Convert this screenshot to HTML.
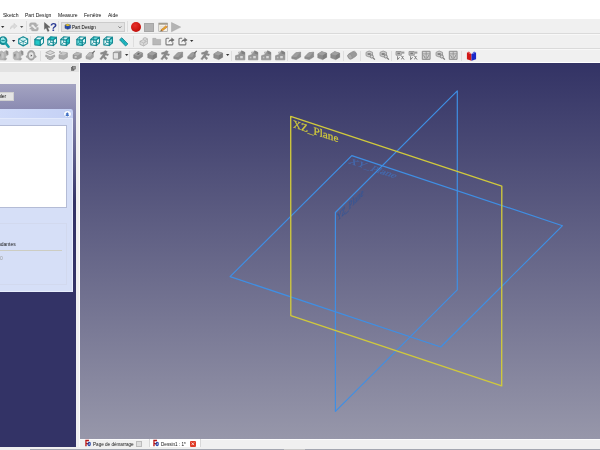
<!DOCTYPE html><html><head><meta charset="utf-8"><title>FreeCAD</title><style>
html,body{margin:0;padding:0;}
body{width:600px;height:450px;overflow:hidden;position:relative;background:#f0f0f0;font-family:"Liberation Sans",sans-serif;}
.a{position:absolute;}
.t{position:absolute;white-space:nowrap;filter:blur(0.2px);transform-origin:0 0;line-height:1;color:#222;}
svg{position:absolute;overflow:visible;}
.i{filter:blur(0.28px);}
</style></head><body>
<div class="a" style="left:0;top:0;width:600px;height:19.3px;background:#fff"></div>
<div class="t" style="left:2.9px;top:13.1px;font-size:20px;transform:scale(0.2525);color:#111;">Sketch</div>
<div class="t" style="left:24.9px;top:13.1px;font-size:20px;transform:scale(0.2525);color:#111;">Part Design</div>
<div class="t" style="left:57.5px;top:13.1px;font-size:20px;transform:scale(0.2525);color:#111;">Measure</div>
<div class="t" style="left:84.0px;top:13.1px;font-size:20px;transform:scale(0.2525);color:#111;">Fenêtre</div>
<div class="t" style="left:107.9px;top:13.1px;font-size:20px;transform:scale(0.2525);color:#111;">Aide</div>
<div class="a" style="left:0;top:19.3px;width:600px;height:42.2px;background:#f0f0f0"></div>
<div class="a" style="left:0;top:33.3px;width:600px;height:0.8px;background:#dadada"></div>
<div class="a" style="left:0;top:34.1px;width:600px;height:0.8px;background:#f8f8f8"></div>
<div class="a" style="left:0;top:48px;width:600px;height:0.8px;background:#dadada"></div>
<div class="a" style="left:0;top:48.8px;width:600px;height:0.8px;background:#f8f8f8"></div>
<div class="a" style="left:0;top:61.5px;width:600px;height:1.8px;background:#fff"></div>
<svg style="left:1.3px;top:25.6px" width="3.4" height="2" viewBox="0 0 4 2.4"><path d="M0 0H4L2 2.4Z" fill="#333"/></svg>
<svg class="i" style="left:8.5px;top:22px" width="9" height="9" viewBox="0 0 20 20"><path d="M3 16C3 9 7 7 11 7V3L18 9L11 15V11C8 11 5 12 3 16Z" fill="#dcdcdc" stroke="#c4c4c4" stroke-width="1"/></svg>
<svg style="left:19.8px;top:25.6px" width="3.4" height="2" viewBox="0 0 4 2.4"><path d="M0 0H4L2 2.4Z" fill="#555"/></svg>
<div class="a" style="left:25.6px;top:21px;width:0.8px;height:11px;background:#dedede"></div>
<svg class="i" style="left:28.8px;top:22.1px" width="9.8" height="9.8" viewBox="0 0 20 20"><path d="M1 9V5Q1 1.5 4.5 1.5H12.5Q15.5 1.5 15.5 5V5.5H19L14 11L9 5.5H12.2Q12.2 5 11.5 5H5.5Q4.6 5 4.6 6V9Z" fill="#b0b0b0" stroke="#a0a0a0" stroke-width=".6"/><g transform="rotate(180 10 10)"><path d="M1 9V5Q1 1.5 4.5 1.5H12.5Q15.5 1.5 15.5 5V5.5H19L14 11L9 5.5H12.2Q12.2 5 11.5 5H5.5Q4.6 5 4.6 6V9Z" fill="#b0b0b0" stroke="#a0a0a0" stroke-width=".6"/></g></svg>
<svg class="i" style="left:44.4px;top:22px" width="6.6" height="10" viewBox="0 0 14 20"><path d="M1 0.5L1 15L4.6 11.6L8 19.5L10.8 18.2L7.4 10.8L12.8 10.6Z" fill="#666" stroke="#484848" stroke-width=".8"/></svg>
<div class="t" style="left:49.6px;top:20.9px;font-size:20px;font-weight:bold;transform:scale(0.58);color:#2b3b94">?</div>
<div class="a" style="left:57.6px;top:21px;width:0.8px;height:11px;background:#dedede"></div>
<div class="a" style="left:61px;top:22px;width:63.5px;height:9.6px;background:#e2e2e2;border:0.6px solid #cccccc;box-sizing:border-box"></div>
<svg class="i" style="left:63.5px;top:23.3px" width="7.5" height="7" viewBox="0 0 20 20"><path d="M2 6L9 3L18 6V15L10 18L2 15Z" fill="#2a4fb0" stroke="#1a2a60" stroke-width="1"/><path d="M2 6L9 3L18 6L10 9Z" fill="#e8c520"/><path d="M10 9V18" stroke="#1a2a60" stroke-width="1"/></svg>
<div class="t" style="left:71.5px;top:24.95px;font-size:20px;transform:scale(0.2275);color:#000;">Part Design</div>
<svg style="left:118.2px;top:26px" width="3.8" height="2.3" viewBox="0 0 5 3"><path d="M0.5 0.5L2.5 2.5L4.5 0.5" fill="none" stroke="#444" stroke-width=".8"/></svg>
<div class="a" style="left:126.6px;top:21px;width:0.8px;height:11px;background:#dedede"></div>
<div class="a" style="left:130.7px;top:22.1px;width:10.3px;height:10.3px;border-radius:50%;background:radial-gradient(circle at 40% 35%,#e8302a,#c4100c 70%,#a00c08);"></div>
<div class="a" style="left:144.4px;top:22.7px;width:9.5px;height:9.4px;background:#b4b4b4;border:0.5px solid #a6a6a6;box-sizing:border-box"></div>
<svg class="i" style="left:157.6px;top:21.8px" width="10.4" height="10.4" viewBox="0 0 20 20"><rect x="1.5" y="2" width="17" height="16.5" fill="#f6f2e6" stroke="#9a9a9a" stroke-width="1.2"/><rect x="1.5" y="2" width="17" height="3.2" fill="#a09a8c"/><path d="M4 9.5H14M4 13H12" stroke="#c0bcb0" stroke-width="1"/><path d="M5.5 15.5L15.5 7L18 9.5L8 17.5Z" fill="#e6b422" stroke="#b83a22" stroke-width=".9"/><path d="M5.5 15.5L4.5 18.5L8 17.5Z" fill="#553"/></svg>
<svg class="i" style="left:171px;top:22px" width="10.2" height="10.2" viewBox="0 0 20 20"><path d="M1 1L19 10L1 19Z" fill="#b4b4b4" stroke="#a4a4a4" stroke-width="1"/></svg>
<svg class="i" style="left:-2px;top:35.5px" width="12" height="12" viewBox="0 0 12 12"><circle cx="5.1" cy="4.6" r="3.4" fill="#7fe0e0" stroke="#148a94" stroke-width="1.8"/><path d="M7.9 7.5L10.5 10.7" stroke="#18a0aa" stroke-width="2.6" stroke-linecap="round"/><path d="M3.4 4.6H6.8" stroke="#148a94" stroke-width="1"/><path d="M3 3.2A2.6 2.6 0 0 1 6 2.2" stroke="#e8ffff" stroke-width=".9" fill="none"/></svg>
<svg style="left:11.600000000000001px;top:39.6px" width="3.4" height="2" viewBox="0 0 4 2.4"><path d="M0 0H4L2 2.4Z" fill="#223"/></svg>
<svg class="i" style="left:17.8px;top:36px" width="10.4" height="10.6" viewBox="0 0 20 20"><path d="M10 1.2L18.6 5.6V14.4L10 18.8L1.4 14.4V5.6Z" fill="#f2fdfd" stroke="#148a94" stroke-width="2.2" stroke-linejoin="round"/><path d="M10 1.2V18.8M1.4 5.6L18.6 14.4M18.6 5.6L1.4 14.4" stroke="#148a94" stroke-width="1.5"/><path d="M10 3.4L15.2 6.2L10 9L4.8 6.2Z" fill="#c4f2f2"/></svg>
<div class="a" style="left:30.400000000000002px;top:36px;width:0.8px;height:11px;background:#dedede"></div>
<svg class="i" style="left:33.8px;top:36.2px" width="10.2" height="10.4" viewBox="0 0 20 20"><path d="M1.6 6.6L12.4 7.6L12.4 18.6L1.6 17.2Z" fill="#22c8c8" stroke="#148a94" stroke-width="2.1" stroke-linejoin="round"/><path d="M1.6 6.6L7.2 1.4L18.6 2.2L12.4 7.6Z" fill="#e4fafa" stroke="#148a94" stroke-width="2.1" stroke-linejoin="round"/><path d="M12.4 7.6L18.6 2.2L18.6 13.4L12.4 18.6Z" fill="#eefcfc" stroke="#148a94" stroke-width="2.1" stroke-linejoin="round"/></svg>
<svg class="i" style="left:47.2px;top:36.2px" width="10.2" height="10.4" viewBox="0 0 20 20"><path d="M1.6 6.6L12.4 7.6L12.4 18.6L1.6 17.2Z" fill="#eafafa" stroke="#148a94" stroke-width="2.1" stroke-linejoin="round"/><path d="M1.6 6.6L7.2 1.4L18.6 2.2L12.4 7.6Z" fill="#22c8c8" stroke="#148a94" stroke-width="2.1" stroke-linejoin="round"/><path d="M12.4 7.6L18.6 2.2L18.6 13.4L12.4 18.6Z" fill="#eafafa" stroke="#148a94" stroke-width="2.1" stroke-linejoin="round"/><path d="M7.2 1.4V12.4L18.6 13.4M7.2 12.4L1.6 17.2" stroke="#148a94" stroke-width="1.6" fill="none"/></svg>
<svg class="i" style="left:60.3px;top:36.2px" width="10.2" height="10.4" viewBox="0 0 20 20"><path d="M1.6 6.6L12.4 7.6L12.4 18.6L1.6 17.2Z" fill="#eafafa" stroke="#148a94" stroke-width="2.1" stroke-linejoin="round"/><path d="M1.6 6.6L7.2 1.4L18.6 2.2L12.4 7.6Z" fill="#d8f6f6" stroke="#148a94" stroke-width="2.1" stroke-linejoin="round"/><path d="M12.4 7.6L18.6 2.2L18.6 13.4L12.4 18.6Z" fill="#22c8c8" stroke="#148a94" stroke-width="2.1" stroke-linejoin="round"/><path d="M7.2 1.4V12.4L18.6 13.4M7.2 12.4L1.6 17.2" stroke="#148a94" stroke-width="1.6" fill="none"/></svg>
<svg class="i" style="left:76.2px;top:36.2px" width="10.2" height="10.4" viewBox="0 0 20 20"><path d="M1.6 6.6L12.4 7.6L12.4 18.6L1.6 17.2Z" fill="#6cdcdc" stroke="#148a94" stroke-width="2.1" stroke-linejoin="round"/><path d="M1.6 6.6L7.2 1.4L18.6 2.2L12.4 7.6Z" fill="#eafafa" stroke="#148a94" stroke-width="2.1" stroke-linejoin="round"/><path d="M12.4 7.6L18.6 2.2L18.6 13.4L12.4 18.6Z" fill="#eafafa" stroke="#148a94" stroke-width="2.1" stroke-linejoin="round"/><path d="M7.2 1.4V12.4L18.6 13.4M7.2 12.4L1.6 17.2" stroke="#148a94" stroke-width="1.6" fill="none"/></svg>
<svg class="i" style="left:89.8px;top:36.2px" width="10.2" height="10.4" viewBox="0 0 20 20"><path d="M1.6 6.6L12.4 7.6L12.4 18.6L1.6 17.2Z" fill="#eafafa" stroke="#148a94" stroke-width="2.1" stroke-linejoin="round"/><path d="M1.6 6.6L7.2 1.4L18.6 2.2L12.4 7.6Z" fill="#6cdcdc" stroke="#148a94" stroke-width="2.1" stroke-linejoin="round"/><path d="M12.4 7.6L18.6 2.2L18.6 13.4L12.4 18.6Z" fill="#eafafa" stroke="#148a94" stroke-width="2.1" stroke-linejoin="round"/><path d="M7.2 1.4V12.4L18.6 13.4M7.2 12.4L1.6 17.2" stroke="#148a94" stroke-width="1.6" fill="none"/></svg>
<svg class="i" style="left:103.2px;top:36.2px" width="10.2" height="10.4" viewBox="0 0 20 20"><path d="M1.6 6.6L12.4 7.6L12.4 18.6L1.6 17.2Z" fill="#eafafa" stroke="#148a94" stroke-width="2.1" stroke-linejoin="round"/><path d="M1.6 6.6L7.2 1.4L18.6 2.2L12.4 7.6Z" fill="#eafafa" stroke="#148a94" stroke-width="2.1" stroke-linejoin="round"/><path d="M12.4 7.6L18.6 2.2L18.6 13.4L12.4 18.6Z" fill="#6cdcdc" stroke="#148a94" stroke-width="2.1" stroke-linejoin="round"/><path d="M7.2 1.4V12.4L18.6 13.4M7.2 12.4L1.6 17.2" stroke="#148a94" stroke-width="1.6" fill="none"/></svg>
<svg class="i" style="left:119.3px;top:36.5px" width="9.4" height="9.8" viewBox="0 0 20 20"><path d="M1.2 5.5L6 1.2L18.8 14.5L14 18.8Z" fill="#20bcc6" stroke="#0f7c88" stroke-width="1.7" stroke-linejoin="round"/><path d="M5 7L7 5.2M8 10L10 8.2M11 13L13 11.2" stroke="#0c6874" stroke-width="1"/></svg>
<div class="a" style="left:133.29999999999998px;top:36px;width:0.8px;height:11px;background:#dedede"></div>
<svg class="i" style="left:138.7px;top:36.5px" width="9.4" height="9.6" viewBox="0 0 20 20"><path d="M2 9L9 5.5V2.5L13 1L18 3.5V14L10 19L2 15.5Z" fill="#dadada" stroke="#a2a2a2" stroke-width="1.3" stroke-linejoin="round"/><path d="M2 9L10 12.5L18 8M10 12.5V19M9 5.5L13 7.5L18 3.5M13 7.5V11" stroke="#a8a8a8" stroke-width="1.1" fill="none"/></svg>
<svg class="i" style="left:151.7px;top:37px" width="9.4" height="8.8" viewBox="0 0 20 20"><path d="M1 3H8L10 5.5H19V18H1Z" fill="#b8b8b8" stroke="#9c9c9c" stroke-width="1"/></svg>
<svg class="i" style="left:165px;top:36.4px" width="9.8" height="10" viewBox="0 0 20 20"><path d="M8.5 4.5H4Q2 4.5 2 6.5V16Q2 18 4 18H14Q16 18 16 16V12.5" fill="#f4f4f4" stroke="#7a7a7a" stroke-width="2.3"/><path d="M7 13.5C7 8.5 10 6.5 13 6.5V3L19.5 8L13 13V9.8C10.5 9.8 8.5 10.5 7 13.5Z" fill="#707070"/></svg>
<svg class="i" style="left:178.3px;top:36.4px" width="9.8" height="10" viewBox="0 0 20 20"><path d="M8.5 4.5H4Q2 4.5 2 6.5V16Q2 18 4 18H14Q16 18 16 16V12.5" fill="#f4f4f4" stroke="#7a7a7a" stroke-width="2.3"/><path d="M7 13.5C7 8.5 10 6.5 13 6.5V3L19.5 8L13 13V9.8C10.5 9.8 8.5 10.5 7 13.5Z" fill="#707070"/></svg>
<svg style="left:190.3px;top:39.6px" width="3.4" height="2" viewBox="0 0 4 2.4"><path d="M0 0H4L2 2.4Z" fill="#333"/></svg>
<svg class="i" style="left:-2.1px;top:50.4px" width="10.4" height="10.4" viewBox="0 0 20 20"><path d="M0.5 5L7 2L11 4.5L15.5 1L19.5 3V9.5L15 11.5V15.5L17.5 17L14 19.5L3 19L0.5 16Z" fill="#b4b4b4" stroke="#a2a2a2" stroke-width=".8"/><path d="M15.5 1L19.5 3V9.5L16 8Z" fill="#8e8e8e"/><path d="M2 8L5 7V12L2 13Z" fill="#8a8a8a"/><path d="M7 5L11 6.5V15L7 17Z" fill="#c6c6c6"/><path d="M13 16L16 17.5L14 19L12 18Z" fill="#909090"/></svg>
<svg class="i" style="left:12.6px;top:50.4px" width="10.4" height="10.4" viewBox="0 0 20 20"><path d="M0.5 5L7 2L11 4.5L15.5 1L19.5 3V9.5L15 11.5V15.5L17.5 17L14 19.5L3 19L0.5 16Z" fill="#b4b4b4" stroke="#a2a2a2" stroke-width=".8"/><path d="M15.5 1L19.5 3V9.5L16 8Z" fill="#8e8e8e"/><path d="M2 8L5 7V12L2 13Z" fill="#8a8a8a"/><path d="M7 5L11 6.5V15L7 17Z" fill="#c6c6c6"/><path d="M13 16L16 17.5L14 19L12 18Z" fill="#909090"/></svg>
<svg class="i" style="left:26.4px;top:50.4px" width="10.4" height="10.4" viewBox="0 0 20 20"><path d="M10 1C15.5 1 17 5.5 17 9L20 13.5L16.5 15C15.5 18 13 19.5 10 19.5C7 19.5 4.5 18 3.5 15L0 13.5L3 9C3 5.5 4.5 1 10 1Z" fill="#a8a8a8" stroke="#8e8e8e" stroke-width="1"/><path d="M10 4.5C13.5 4.5 14.5 7.5 14.5 10.5C14.5 14.5 12.5 16.5 10 16.5C7.5 16.5 5.5 14.5 5.5 10.5C5.5 7.5 6.5 4.5 10 4.5Z" fill="#e6e6e6"/><path d="M9.2 8.8L12.2 10.8L9.2 12.8Z" fill="#555"/></svg>
<div class="a" style="left:40.1px;top:50.5px;width:0.8px;height:10.0px;background:#dedede"></div>
<svg class="i" style="left:45.0px;top:50.4px" width="10.4" height="10.4" viewBox="0 0 20 20"><path d="M1.5 5L10 1L18.5 5L10 9Z" fill="#d8d8d8" stroke="#909090" stroke-width="1.3"/><path d="M1.5 9.5L10 13L18.5 9.5V13L10 16.5L1.5 13Z" fill="#b0b0b0" stroke="#909090" stroke-width="1.2"/><path d="M4 16L10 18.5L16 16" fill="none" stroke="#8a8a8a" stroke-width="1.6"/></svg>
<svg class="i" style="left:58.1px;top:50.4px" width="10.4" height="10.4" viewBox="0 0 20 20"><path d="M2 9L9 4L18 5.5V14L11 18L2 16Z" fill="#acacac" stroke="#8c8c8c" stroke-width="1.1"/><path d="M2 9L9 4L18 5.5L11 10Z" fill="#c8c8c8"/><path d="M3 3L8 7M3 3L3 6M3 3L6 3" stroke="#8c8c8c" stroke-width="1.2" fill="none"/></svg>
<svg class="i" style="left:71.7px;top:50.4px" width="10.4" height="10.4" viewBox="0 0 20 20"><path d="M2 9L9 4.5L18 6.5V14.5L11 18L2 16Z" fill="#9a9a9a" stroke="#828282" stroke-width="1"/><path d="M2 9L9 4.5L18 6.5L11 10.5Z" fill="#b6b6b6"/><path d="M5 11.5H9V15H5Z" fill="#d0d0d0"/></svg>
<svg class="i" style="left:84.9px;top:50.4px" width="10.4" height="10.4" viewBox="0 0 20 20"><path d="M2 12L8 5L16 5V14L10 18.5L2 16.5Z" fill="#a4a4a4" stroke="#8a8a8a" stroke-width="1"/><path d="M2 12L8 5L16 5L10 13Z" fill="#bababa"/><path d="M13 6L18 1L19.5 2.5L14.5 7.5Z" fill="#6e6e6e"/></svg>
<svg class="i" style="left:98.60000000000001px;top:50.4px" width="10.4" height="10.4" viewBox="0 0 20 20"><path d="M12 1L16 3L14 6.5L18.5 8L17 11L12.5 9.5L11 12.5L15 15.5L12.5 19L8 14.5L4.5 19L1.5 17.5L6 11L8 7L3.5 8.5L2.5 5.5L9 3.5Z" fill="#8a8a8a" stroke="#7a7a7a" stroke-width=".6"/></svg>
<svg class="i" style="left:111.8px;top:50.4px" width="10.4" height="10.4" viewBox="0 0 20 20"><path d="M2.5 5H13V17.5H2.5Z" fill="#e4e4e4" stroke="#848484" stroke-width="1.5"/><path d="M13 5L17.5 2.5V15L13 17.5Z" fill="#9c9c9c" stroke="#848484" stroke-width="1"/><path d="M2.5 5L7 2.5H17.5" stroke="#848484" stroke-width="1.2" fill="none"/></svg>
<svg style="left:124.5px;top:54.1px" width="3.4" height="2" viewBox="0 0 4 2.4"><path d="M0 0H4L2 2.4Z" fill="#333"/></svg>
<div class="a" style="left:129.4px;top:50.5px;width:0.8px;height:10.0px;background:#dedede"></div>
<svg class="i" style="left:133.1px;top:50.4px" width="10.4" height="10.4" viewBox="0 0 20 20"><path d="M1.5 9L10 3L18.5 6V12.5L10 18.5L1.5 15.5Z" fill="#8a8a8a" stroke="#767676" stroke-width="1"/><path d="M1.5 9L10 3L18.5 6L10 12Z" fill="#a2a2a2"/><path d="M7 8L10.5 5.8L13.5 7L10 9.2Z" fill="#5e5e5e"/></svg>
<svg class="i" style="left:146.5px;top:50.4px" width="10.4" height="10.4" viewBox="0 0 20 20"><path d="M1.5 7.5L9 3L18.5 6V14L11 18.5L1.5 15Z" fill="#8c8c8c" stroke="#7a7a7a" stroke-width="1"/><path d="M1.5 7.5L9 3L18.5 6L11 10.5Z" fill="#a0a0a0"/><path d="M11 10.5V18.5L18.5 14V6Z" fill="#7e7e7e"/></svg>
<svg class="i" style="left:159.79999999999998px;top:50.4px" width="10.4" height="10.4" viewBox="0 0 20 20"><path d="M12 1L16 3L14 6.5L18.5 8L17 11L12.5 9.5L11 12.5L15 15.5L12.5 19L8 14.5L4.5 19L1.5 17.5L6 11L8 7L3.5 8.5L2.5 5.5L9 3.5Z" fill="#8a8a8a" stroke="#7a7a7a" stroke-width=".6"/></svg>
<svg class="i" style="left:173.1px;top:50.4px" width="10.4" height="10.4" viewBox="0 0 20 20"><path d="M1.5 13L9 5.5L18.5 4V13.5L10 18.5L1.5 16.5Z" fill="#8c8c8c" stroke="#787878" stroke-width="1"/><path d="M1.5 13L9 5.5L18.5 4L10 13.5Z" fill="#9e9e9e"/></svg>
<svg class="i" style="left:186.5px;top:50.4px" width="10.4" height="10.4" viewBox="0 0 20 20"><path d="M1.5 13L9 5.5L16 4.5V13.5L10 18.5L1.5 16.5Z" fill="#8c8c8c" stroke="#787878" stroke-width="1"/><path d="M1.5 13L9 5.5L16 4.5L10 13.5Z" fill="#9e9e9e"/><path d="M13 6L18 1L19.5 2.5L14.5 7.5Z" fill="#6e6e6e"/></svg>
<svg class="i" style="left:200.0px;top:50.4px" width="10.4" height="10.4" viewBox="0 0 20 20"><path d="M12 1L16 3L14 6.5L18.5 8L17 11L12.5 9.5L11 12.5L15 15.5L12.5 19L8 14.5L4.5 19L1.5 17.5L6 11L8 7L3.5 8.5L2.5 5.5L9 3.5Z" fill="#8a8a8a" stroke="#7a7a7a" stroke-width=".6"/></svg>
<svg class="i" style="left:213.1px;top:50.4px" width="10.4" height="10.4" viewBox="0 0 20 20"><path d="M1.5 7.5L9 3L18.5 6V14L11 18.5L1.5 15Z" fill="#8c8c8c" stroke="#7a7a7a" stroke-width="1"/><path d="M1.5 7.5L9 3L18.5 6L11 10.5Z" fill="#a0a0a0"/><path d="M11 10.5V18.5L18.5 14V6Z" fill="#7e7e7e"/></svg>
<svg style="left:225.8px;top:54.1px" width="3.4" height="2" viewBox="0 0 4 2.4"><path d="M0 0H4L2 2.4Z" fill="#333"/></svg>
<div class="a" style="left:230.9px;top:50.5px;width:0.8px;height:10.0px;background:#dedede"></div>
<svg class="i" style="left:234.5px;top:50.4px" width="10.4" height="10.4" viewBox="0 0 20 20"><path d="M1 19V11L7 9L12.5 1.5L19 4.5V19Z" fill="#989898" stroke="#848484" stroke-width="1"/><path d="M10 11.5H15V16H10Z" fill="#d8d8d8"/><path d="M3.5 13H6.5V16H3.5Z" fill="#c0c0c0"/><path d="M12.5 1.5L19 4.5V9L12.5 6.5Z" fill="#808080"/><path d="M6 4L9 2.5V6L6 7Z" fill="#b0b0b0"/></svg>
<svg class="i" style="left:247.79999999999998px;top:50.4px" width="10.4" height="10.4" viewBox="0 0 20 20"><path d="M1 19V11L7 9L12.5 1.5L19 4.5V19Z" fill="#989898" stroke="#848484" stroke-width="1"/><path d="M10 11.5H15V16H10Z" fill="#d8d8d8"/><path d="M3.5 13H6.5V16H3.5Z" fill="#c0c0c0"/><path d="M12.5 1.5L19 4.5V9L12.5 6.5Z" fill="#808080"/><path d="M6 4L9 2.5V6L6 7Z" fill="#b0b0b0"/></svg>
<svg class="i" style="left:261.09999999999997px;top:50.4px" width="10.4" height="10.4" viewBox="0 0 20 20"><path d="M1 19V11L7 9L12.5 1.5L19 4.5V19Z" fill="#989898" stroke="#848484" stroke-width="1"/><path d="M10 11.5H15V16H10Z" fill="#d8d8d8"/><path d="M3.5 13H6.5V16H3.5Z" fill="#c0c0c0"/><path d="M12.5 1.5L19 4.5V9L12.5 6.5Z" fill="#808080"/><path d="M6 4L9 2.5V6L6 7Z" fill="#b0b0b0"/></svg>
<svg class="i" style="left:274.5px;top:50.4px" width="10.4" height="10.4" viewBox="0 0 20 20"><path d="M1 19V11L7 9L12.5 1.5L19 4.5V19Z" fill="#989898" stroke="#848484" stroke-width="1"/><path d="M10 11.5H15V16H10Z" fill="#d8d8d8"/><path d="M3.5 13H6.5V16H3.5Z" fill="#c0c0c0"/><path d="M12.5 1.5L19 4.5V9L12.5 6.5Z" fill="#808080"/><path d="M6 4L9 2.5V6L6 7Z" fill="#b0b0b0"/></svg>
<div class="a" style="left:287.40000000000003px;top:50.5px;width:0.8px;height:10.0px;background:#dedede"></div>
<svg class="i" style="left:290.59999999999997px;top:50.4px" width="10.4" height="10.4" viewBox="0 0 20 20"><path d="M1.5 13L9 5.5L18.5 4V13.5L10 18.5L1.5 16.5Z" fill="#8c8c8c" stroke="#787878" stroke-width="1"/><path d="M1.5 13L9 5.5L18.5 4L10 13.5Z" fill="#9e9e9e"/></svg>
<svg class="i" style="left:303.8px;top:50.4px" width="10.4" height="10.4" viewBox="0 0 20 20"><path d="M1.5 13L9 5.5L18.5 4V13.5L10 18.5L1.5 16.5Z" fill="#8c8c8c" stroke="#787878" stroke-width="1"/><path d="M1.5 13L9 5.5L18.5 4L10 13.5Z" fill="#9e9e9e"/></svg>
<svg class="i" style="left:316.8px;top:50.4px" width="10.4" height="10.4" viewBox="0 0 20 20"><path d="M1.5 7.5L9 3L18.5 6V14L11 18.5L1.5 15Z" fill="#8c8c8c" stroke="#7a7a7a" stroke-width="1"/><path d="M1.5 7.5L9 3L18.5 6L11 10.5Z" fill="#a0a0a0"/><path d="M11 10.5V18.5L18.5 14V6Z" fill="#7e7e7e"/></svg>
<svg class="i" style="left:330.09999999999997px;top:50.4px" width="10.4" height="10.4" viewBox="0 0 20 20"><path d="M1.5 7.5L9 3L18.5 6V14L11 18.5L1.5 15Z" fill="#8c8c8c" stroke="#7a7a7a" stroke-width="1"/><path d="M1.5 7.5L9 3L18.5 6L11 10.5Z" fill="#a0a0a0"/><path d="M11 10.5V18.5L18.5 14V6Z" fill="#7e7e7e"/></svg>
<div class="a" style="left:343.1px;top:50.5px;width:0.8px;height:10.0px;background:#dedede"></div>
<svg class="i" style="left:346.5px;top:50.4px" width="10.4" height="10.4" viewBox="0 0 20 20"><g transform="rotate(-32 10 10)"><rect x="1" y="4.5" width="18" height="11" rx="5" ry="5.5" fill="#9a9a9a" stroke="#828282" stroke-width="1"/><ellipse cx="5" cy="10" rx="3.4" ry="5" fill="#ababab" stroke="#8a8a8a" stroke-width=".8"/></g></svg>
<div class="a" style="left:359.90000000000003px;top:50.5px;width:0.8px;height:10.0px;background:#dedede"></div>
<svg class="i" style="left:364.7px;top:50.4px" width="10.4" height="10.4" viewBox="0 0 20 20"><path d="M2 4.5L8 2L14.5 4.5V11L8 13.5L2 11Z" fill="#cacaca" stroke="#8e8e8e" stroke-width="1.5"/><path d="M5 6H11V9.5H5Z" fill="#7e7e7e"/><circle cx="13" cy="12.5" r="3" fill="#d8d8d8" stroke="#7a7a7a" stroke-width="1.7"/><path d="M15.5 15L19 18.5" stroke="#7a7a7a" stroke-width="2.4"/></svg>
<svg class="i" style="left:378.7px;top:50.4px" width="10.4" height="10.4" viewBox="0 0 20 20"><path d="M2 4.5L8 2L14.5 4.5V11L8 13.5L2 11Z" fill="#cacaca" stroke="#8e8e8e" stroke-width="1.5"/><path d="M5 6H11V9.5H5Z" fill="#7e7e7e"/><circle cx="13" cy="12.5" r="3" fill="#d8d8d8" stroke="#7a7a7a" stroke-width="1.7"/><path d="M15.5 15L19 18.5" stroke="#7a7a7a" stroke-width="2.4"/></svg>
<div class="a" style="left:391.40000000000003px;top:50.5px;width:0.8px;height:10.0px;background:#dedede"></div>
<svg class="i" style="left:394.5px;top:50.4px" width="10.4" height="10.4" viewBox="0 0 20 20"><path d="M2 3H12V10H2Z" fill="#c6c6c6" stroke="#8a8a8a" stroke-width="1.6"/><path d="M4.5 5H9.5V8H4.5Z" fill="#7a7a7a"/><path d="M13 3H18V7H13Z" fill="#9a9a9a"/><path d="M5 12V18.5M5 18.5L9 14M12 11L17.5 18.5M16 11.5L12.5 18" stroke="#7e7e7e" stroke-width="1.9" fill="none"/></svg>
<svg class="i" style="left:407.8px;top:50.4px" width="10.4" height="10.4" viewBox="0 0 20 20"><path d="M2 3H12V10H2Z" fill="#c6c6c6" stroke="#8a8a8a" stroke-width="1.6"/><path d="M4.5 5H9.5V8H4.5Z" fill="#7a7a7a"/><path d="M13 3H18V7H13Z" fill="#9a9a9a"/><path d="M5 12V18.5M5 18.5L9 14M12 11L17.5 18.5M16 11.5L12.5 18" stroke="#7e7e7e" stroke-width="1.9" fill="none"/></svg>
<svg class="i" style="left:420.8px;top:50.4px" width="10.4" height="10.4" viewBox="0 0 20 20"><path d="M2.5 2.5H17.5V18H2.5Z" fill="#d2d2d2" stroke="#868686" stroke-width="1.8"/><path d="M10 2.5V18M2.5 7.5H17.5" stroke="#8c8c8c" stroke-width="1.5"/><path d="M5 10L8 16M15 10L12 16" stroke="#7e7e7e" stroke-width="1.6"/></svg>
<svg class="i" style="left:434.5px;top:50.4px" width="10.4" height="10.4" viewBox="0 0 20 20"><path d="M2 4.5L8 2L14.5 4.5V11L8 13.5L2 11Z" fill="#cacaca" stroke="#8e8e8e" stroke-width="1.5"/><path d="M5 6H11V9.5H5Z" fill="#7e7e7e"/><circle cx="13" cy="12.5" r="3" fill="#d8d8d8" stroke="#7a7a7a" stroke-width="1.7"/><path d="M15.5 15L19 18.5" stroke="#7a7a7a" stroke-width="2.4"/></svg>
<svg class="i" style="left:447.8px;top:50.4px" width="10.4" height="10.4" viewBox="0 0 20 20"><path d="M2.5 2.5H17.5V18H2.5Z" fill="#d2d2d2" stroke="#868686" stroke-width="1.8"/><path d="M10 2.5V18M2.5 7.5H17.5" stroke="#8c8c8c" stroke-width="1.5"/><path d="M5 10L8 16M15 10L12 16" stroke="#7e7e7e" stroke-width="1.6"/></svg>
<div class="a" style="left:461.20000000000005px;top:50.5px;width:0.8px;height:10.0px;background:#dedede"></div>
<svg class="i" style="left:466px;top:50.6px" width="11" height="10.2" viewBox="0 0 20 20"><path d="M1 3L10 6V19L1 16Z" fill="#d01818"/><path d="M19 3L10 6V19L19 16Z" fill="#1828c8"/><path d="M1 3L5 1L10 6Z" fill="#e85050"/><path d="M19 3L15 1L10 6Z" fill="#5060e0"/></svg>
<div class="a" style="left:0;top:63.2px;width:80px;height:386.8px;background:#f0f0f0"></div>
<div class="a" style="left:0;top:63.2px;width:78.5px;height:8.6px;background:#e2e2e2"></div>
<div class="a" style="left:78.5px;top:63.2px;width:1.5px;height:384px;background:#fafafa"></div>
<svg style="left:70.9px;top:65.6px" width="4.6" height="4.8" viewBox="0 0 20 20"><rect x="1.5" y="7" width="11.5" height="11.5" fill="#8a8a8a" stroke="#4e4e4e" stroke-width="2.2"/><rect x="7" y="1.5" width="11.5" height="11.5" fill="#9a9a9a" stroke="#4e4e4e" stroke-width="2.2"/></svg>
<div class="a" style="left:0;top:83.8px;width:75.6px;height:363.4px;background:linear-gradient(to bottom,#a4a4c2 0px,#8888b0 28px,#333366 118px,#333366 100%)"></div>
<div class="a" style="left:-2px;top:92px;width:16px;height:8.8px;background:#e4e4e4;border:0.5px solid #d0d0d0;box-sizing:border-box"></div>
<div class="t" style="left:-11.0px;top:94.0px;font-size:20px;transform:scale(0.2500);color:#111;">Annuler</div>
<div class="a" style="left:-3px;top:109.3px;width:75.7px;height:9.6px;background:linear-gradient(to right,#d0dbf9,#c5d1f5);border-radius:0 2.4px 0 0;border-bottom:0.7px solid #e2e9fc;box-sizing:border-box"></div>
<div class="a" style="left:64.4px;top:110.8px;width:6.2px;height:6.2px;border-radius:50%;background:#fafcff;box-shadow:0 0 0.6px 0.2px #9fb2e0"></div>
<svg style="left:65.2px;top:111.5px" width="4.6" height="4.8" viewBox="0 0 20 20"><path d="M10 0.5L18 9H13.5L18.5 17H12V19.5H8V17H1.5L6.5 9H2Z" fill="#4270c4"/></svg>
<div class="a" style="left:-3px;top:118.7px;width:75.7px;height:173px;background:#d6dff7;border-right:0.6px solid #e8eefc;border-bottom:0.6px solid #e8eefc;box-sizing:border-box"></div>
<div class="a" style="left:-3px;top:125.3px;width:69.5px;height:82.6px;background:#fff;border:0.7px solid #b4bcd6;box-sizing:border-box"></div>
<div class="a" style="left:-3px;top:222.7px;width:69.8px;height:62.5px;border:0.6px solid #d2d9ee;box-sizing:border-box"></div>
<div class="t" style="left:-14.2px;top:241.6px;font-size:20px;transform:scale(0.2500);color:#1a1a1a;">Dépendantes</div>
<div class="a" style="left:0;top:250.1px;width:62px;height:0.6px;background:#cdcdc2"></div>
<div class="t" style="left:0px;top:255.5px;font-size:20px;transform:scale(0.2500);color:#9a9a9a;">0</div>
<div class="a" style="left:80px;top:63.3px;width:520px;height:375.3px;background:linear-gradient(to bottom,#333365,#9797aa)"></div>
<svg style="left:0;top:0;filter:blur(0.2px)" width="600" height="450" viewBox="0 0 600 450"><g fill="none" stroke-width="1.2" stroke-linejoin="round"><path d="M351.8 155.6L562.5 225.7L440.8 347L230.1 276.6Z" stroke="#3f8fe4"/><path d="M335.4 212.5L457.3 90.8L457.3 289.8L335.4 411.3Z" stroke="#3f8fe4"/><path d="M290.7 116.3L501.8 186.2L501.7 385.9L290.8 315.6Z" stroke="#d0c93c" stroke-width="1.35"/></g><text transform="matrix(1.03 0.341 0 1 292.9 127.3)" font-family="Liberation Serif,serif" font-size="10.9" fill="#d0c93c" stroke="#d0c93c" stroke-width="0.25">XZ_Plane</text><text transform="matrix(1.03 0.341 -0.6 0.6 347.8 162.9)" font-family="Liberation Serif,serif" font-size="10.9" fill="#446aae" stroke="#446aae" stroke-width="0.2">XY_Plane</text><text transform="matrix(0.6 -0.6 0 1 336.9 221.6)" font-family="Liberation Serif,serif" font-size="10.9" fill="#355696" stroke="#355696" stroke-width="0.2">YZ_Plane</text></svg>
<div class="a" style="left:80px;top:438.6px;width:520px;height:0.9px;background:#fcfcfc"></div>
<div class="a" style="left:80px;top:439.5px;width:520px;height:8.5px;background:#f0f0f0"></div>
<div class="a" style="left:148.5px;top:439.2px;width:52px;height:8.8px;background:#fff;border-left:0.5px solid #d8d8d8;border-right:0.5px solid #d8d8d8;box-sizing:border-box"></div>
<div class="t" style="left:84.8px;top:439.2px;font-size:20px;font-weight:bold;transform:scale(0.34,0.44);color:#b81212;letter-spacing:-4.5px;-webkit-text-stroke:0.8px #b81212">F<span style="color:#2444a8;font-size:16px;-webkit-text-stroke:1px #2444a8">o</span></div>
<div class="t" style="left:93.3px;top:442.1px;font-size:20px;transform:scale(0.2300);color:#111;">Page de démarrage</div>
<div class="a" style="left:136.3px;top:441.3px;width:5.4px;height:5.4px;background:#dedede;border:0.6px solid #bcbcbc;box-sizing:border-box"></div>
<div class="t" style="left:153.4px;top:439.2px;font-size:20px;font-weight:bold;transform:scale(0.34,0.44);color:#b81212;letter-spacing:-4.5px;-webkit-text-stroke:0.8px #b81212">F<span style="color:#2444a8;font-size:16px;-webkit-text-stroke:1px #2444a8">o</span></div>
<div class="t" style="left:161.3px;top:442.1px;font-size:20px;transform:scale(0.2300);color:#111;">Dessin1 : 1*</div>
<div class="a" style="left:190px;top:441.2px;width:5.6px;height:5.4px;background:#e03c28;border-radius:1px"></div>
<svg style="left:191px;top:442.1px" width="3.6" height="3.6" viewBox="0 0 20 20"><path d="M3 3L17 17M17 3L3 17" stroke="#fff" stroke-width="4"/></svg>
<div class="a" style="left:0;top:447.2px;width:600px;height:2.8px;background:#f0f0f0"></div>
<div class="a" style="left:30px;top:448.8px;width:570px;height:1.2px;background:#a3a6b0"></div>
<div class="a" style="left:284px;top:448.8px;width:21px;height:1.2px;background:#c9c9c9"></div>
</body></html>
